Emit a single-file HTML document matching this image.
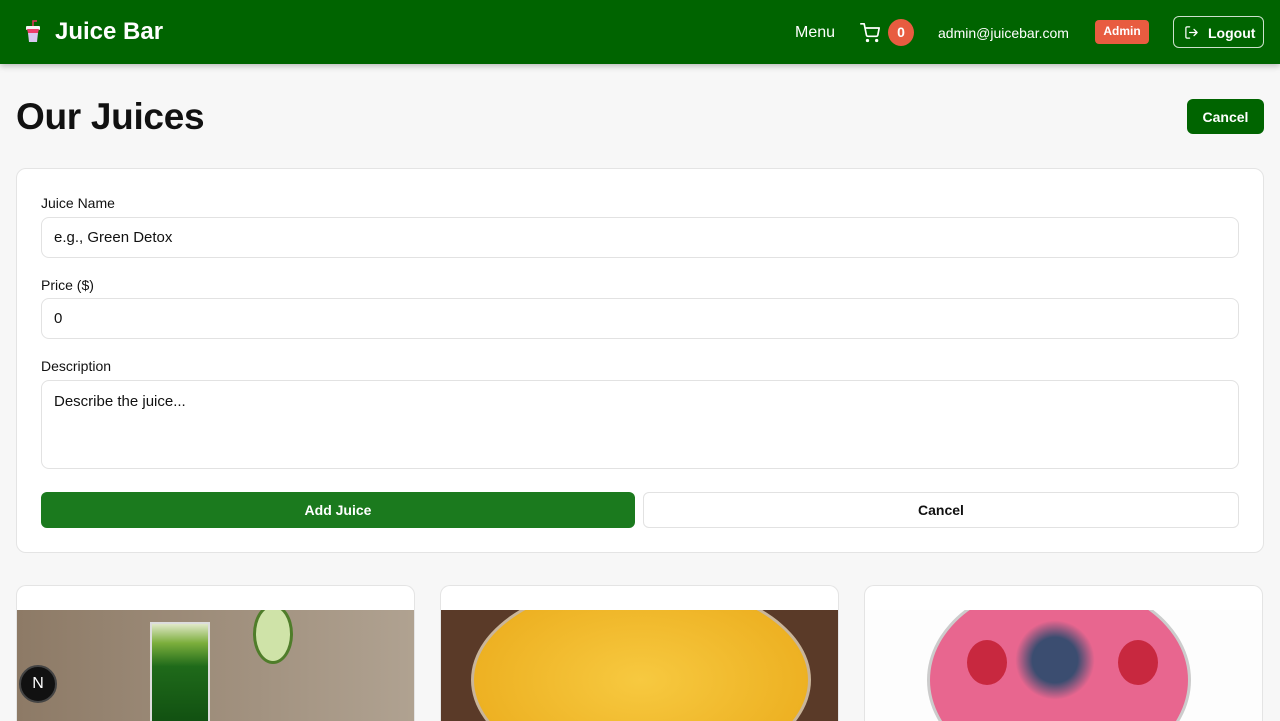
<!DOCTYPE html>
<html><head><meta charset="utf-8"><style>
*{box-sizing:border-box;margin:0;padding:0}
body{width:1280px;height:720px;overflow:hidden;background:#f7f7f7;font-family:"Liberation Sans",sans-serif;color:#111;position:relative}
.nav{position:absolute;left:0;top:0;width:1280px;height:64px;background:#006400;box-shadow:0 2px 6px rgba(0,0,0,.25);color:#fff}
.t{position:absolute;white-space:nowrap}
h1{position:absolute;left:16px;top:96px;font-size:37px;font-weight:700;letter-spacing:-0.3px}
.btn{position:absolute;border-radius:6px;font-size:14px;font-weight:700;display:flex;align-items:center;justify-content:center}
.panel{position:absolute;left:16px;top:168px;width:1248px;height:385px;background:#fff;border:1px solid #e4e4e4;border-radius:10px}
.lbl{position:absolute;left:41px;font-size:14px}
.inp{position:absolute;left:41px;width:1198px;border:1px solid #e2e2e2;border-radius:8px;background:#fff;font-size:15px;padding-left:12px;display:flex;align-items:center}
.card{position:absolute;top:585px;width:399px;height:136px;background:#fff;border:1px solid #e4e4e4;border-bottom:none;border-radius:10px 10px 0 0;overflow:hidden}
.img{position:absolute;left:0;top:24px;width:100%;height:120px;overflow:hidden}
</style></head><body>
<div class="nav">
 <svg class="t" style="left:24px;top:19px" width="18" height="26" viewBox="0 0 18 26"><path d="M9 8V2h4" stroke="#e8345f" stroke-width="1.5" fill="none"/><rect x="2" y="7" width="14" height="4" rx="1" fill="#f5f5f5"/><path d="M3 10h12l-1 4H4z" fill="#ee3d6b"/><path d="M4 14h10l-1 9H5z" fill="#d8c8f0"/></svg>
 <div class="t" style="left:55px;top:18px;font-size:24px;font-weight:700">Juice Bar</div>
 <div class="t" style="left:795px;top:24px;font-size:16px">Menu</div>
 <svg class="t" style="left:860px;top:23px" width="20" height="20" viewBox="0 0 24 24" fill="none" stroke="#fff" stroke-width="2" stroke-linecap="round" stroke-linejoin="round"><circle cx="9" cy="21" r="1"/><circle cx="20" cy="21" r="1"/><path d="M1 1h4l2.7 13.4a2 2 0 0 0 2 1.6h9.7a2 2 0 0 0 2-1.6L23 6H6"/></svg>
 <div class="t" style="left:888px;top:19px;width:26px;height:27px;border-radius:50%;background:#e85c40;font-size:14px;font-weight:700;text-align:center;line-height:27px">0</div>
 <div class="t" style="left:938px;top:25px;font-size:14px">admin@juicebar.com</div>
 <div class="t" style="left:1095px;top:20px;width:54px;height:24px;background:#e85c40;border-radius:4px;font-size:12px;font-weight:700;text-align:center;line-height:23px">Admin</div>
 <div class="t" style="left:1173px;top:16px;width:91px;height:32px;border:1px solid rgba(255,255,255,.8);border-radius:6px"></div>
 <svg class="t" style="left:1184px;top:25px" width="15" height="15" viewBox="0 0 24 24" fill="none" stroke="#fff" stroke-width="2" stroke-linecap="round" stroke-linejoin="round"><path d="M9 21H5a2 2 0 0 1-2-2V5a2 2 0 0 1 2-2h4"/><path d="M16 17l5-5-5-5M21 12H9"/></svg>
 <div class="t" style="left:1208px;top:25px;font-size:14px;font-weight:700">Logout</div>
</div>
<h1>Our Juices</h1>
<div class="btn" style="left:1187px;top:99px;width:77px;height:35px;background:#006400;color:#fff">Cancel</div>
<div class="panel"></div>
<div class="lbl" style="top:195px">Juice Name</div>
<div class="inp" style="top:217px;height:41px">e.g., Green Detox</div>
<div class="lbl" style="top:277px">Price ($)</div>
<div class="inp" style="top:298px;height:41px">0</div>
<div class="lbl" style="top:358px">Description</div>
<div class="inp" style="top:380px;height:89px;align-items:flex-start;padding-top:12px">Describe the juice...</div>
<div class="btn" style="left:41px;top:492px;width:594px;height:36px;background:#1b7a1e;color:#fff">Add Juice</div>
<div class="btn" style="left:643px;top:492px;width:596px;height:36px;background:#fff;border:1px solid #e2e2e2;color:#111;font-weight:600">Cancel</div>
<div class="card" style="left:16px"><div class="img" style="background:linear-gradient(90deg,#8d7a66,#b0a291)">
 <div style="position:absolute;left:133px;top:12px;width:60px;height:110px;background:linear-gradient(#e0e8c8 0,#7cae3c 18%,#1f6a1a 40%,#0f4d10);border:2px solid #ddd"></div>
 <div style="position:absolute;left:236px;top:-6px;width:40px;height:60px;border-radius:50%;background:#cfe3a8;border:3px solid #4f7d2a"></div>
</div></div>
<div class="card" style="left:440px"><div class="img" style="background:#5a3a28"><div style="position:absolute;left:30px;top:-30px;width:340px;height:200px;border-radius:50%;background:radial-gradient(#f7c940,#e9a716);border:3px solid #c9b59a"></div></div></div>
<div class="card" style="left:864px"><div class="img" style="background:#fdfdfd"><div style="position:absolute;left:62px;top:-30px;width:264px;height:200px;border-radius:50%;background:#e8668f;border:3px solid #ccc"></div>
 <div style="position:absolute;left:150px;top:10px;width:80px;height:80px;border-radius:50%;background:radial-gradient(#3b4d70 40%,transparent 70%)"></div>
 <div style="position:absolute;left:102px;top:30px;width:40px;height:45px;border-radius:50%;background:#c8283f"></div>
 <div style="position:absolute;left:253px;top:30px;width:40px;height:45px;border-radius:50%;background:#c8283f"></div></div></div>
<div style="position:absolute;left:19px;top:665px;width:38px;height:38px;border-radius:50%;background:#111;border:2px solid #444;color:#fff;font-size:16px;text-align:center;line-height:34px">N</div>
</body></html>
